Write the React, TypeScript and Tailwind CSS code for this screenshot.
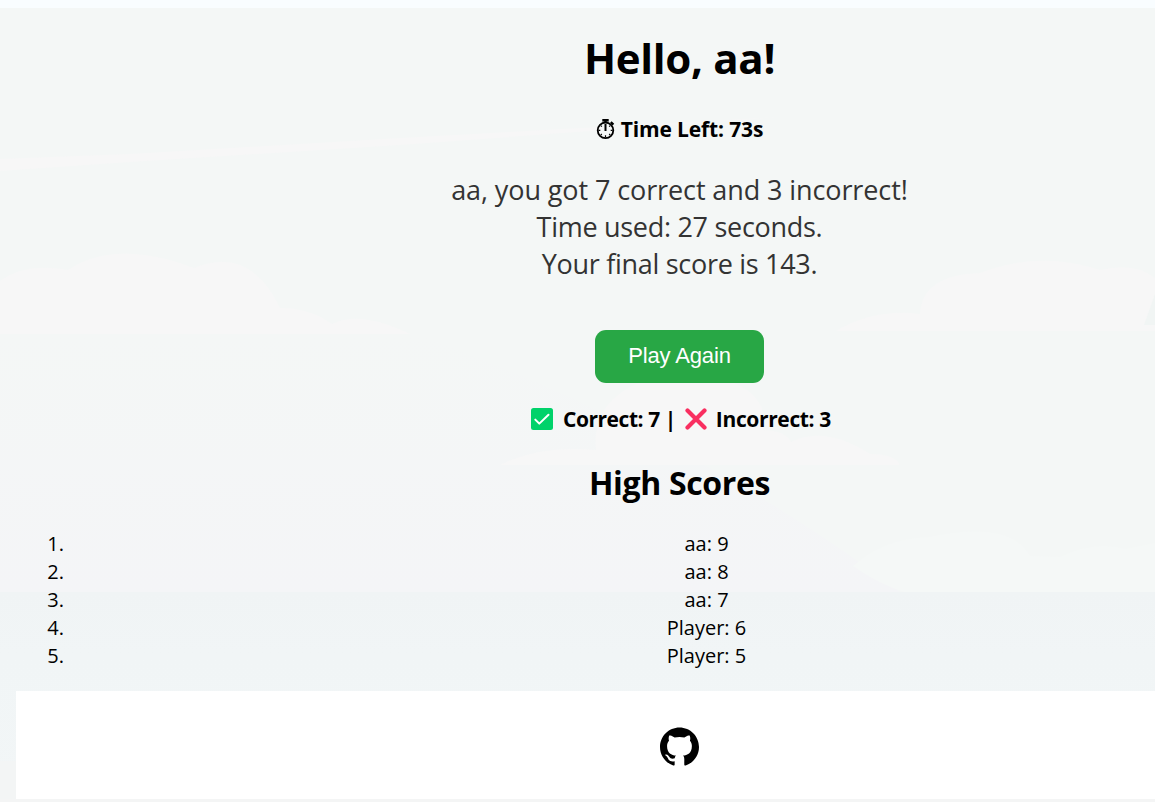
import { SiGithub } from "react-icons/si";

const scores = [
  { name: "aa", score: 9 },
  { name: "aa", score: 8 },
  { name: "aa", score: 7 },
  { name: "Player", score: 6 },
  { name: "Player", score: 5 },
];

function Sky() {
  return (
    <svg className="absolute inset-0 -z-10" width="1155" height="802" viewBox="0 0 1155 802" aria-hidden="true">
      <defs>
        <linearGradient id="sea" x1="0" y1="0" x2="0" y2="1">
          <stop offset="0" stopColor="#f0f4f5" />
          <stop offset="0.3" stopColor="#f1f5f6" />
          <stop offset="1" stopColor="#f2f6f7" />
        </linearGradient>
        <linearGradient id="haze" x1="0" y1="0" x2="0" y2="1">
          <stop offset="0" stopColor="#f4f7f6" />
          <stop offset="1" stopColor="#f4f5f7" />
        </linearGradient>
      </defs>
      <rect width="1155" height="802" fill="#f4f7f6" />
      <path d="M0 335H420Q700 440 900 592H0Z" fill="url(#haze)" />
      <path d="M0 159L130 154L400 138L780 117L400 145L130 162L0 171Z" fill="#f7f7f7" />
      <path d="M0 281Q25 262 68 270Q115 238 194 268Q250 245 280 308Q310 308 332 324Q360 310 410 334H0Z" fill="#f7f7f7" />
      <path d="M836 331Q875 308 920 314Q922 275 980 273Q1040 250 1100 270Q1135 262 1155 278V331Z" fill="#f7f7f7" />
      <path d="M500 465Q540 445 596 450Q590 395 660 375Q745 370 762 408V430Q785 430 791 442Q825 425 870 454Q895 454 900 465Z" fill="#f7f7f7" />
      <path d="M853 566Q885 538 930 537Q1010 520 1030 556L1060 557Q1095 540 1125 549L1155 543V592H905Q880 585 853 566Z" fill="#f5f8f7" />
      <rect y="592" width="1155" height="210" fill="url(#sea)" />
      <path d="M1155 230L1134 249M1155 294L1144 325H1155Z" fill="#f1f5f4" />
      <rect y="761" width="16" height="41" fill="#f3f5f5" />
      <rect y="799" width="1155" height="3" fill="#f4f5f5" />
      <rect width="1155" height="8" fill="#f9fdff" />
    </svg>
  );
}

function Stopwatch() {
  return (
    <svg className="mr-[6px]" width="19" height="22" viewBox="0 0 19 22" fill="none" stroke="#000" aria-hidden="true">
      <circle cx="9.5" cy="12.3" r="7.8" strokeWidth="1.8" />
      <path d="M6.3 2.3h6.4" strokeWidth="2.6" />
      <path d="M9.5 2v3M14.8 4.2l2.6 2.4" strokeWidth="2.4" />
      <path d="M9.5 6v7" strokeWidth="2" />
      <path d="M9.5 17.3v2M2.5 12.3h1.8M14.7 12.3h1.8M4.8 7.6l1 1M14.2 7.6l-1 1M4.8 17l1-1M14.2 17l-1-1" strokeWidth="1.2" />
    </svg>
  );
}

export default function App() {
  return (
    <div className="relative isolate h-[802px] w-[1155px] overflow-hidden font-['Open_Sans',sans-serif] text-black">
      <Sky />
      <main className="ml-4 flex w-[1327px] flex-col text-center">
        <h1 className="mt-7 h-[60px] text-[42px] leading-[60px] font-bold tracking-[-0.3px] whitespace-nowrap">
          Hello, aa!
        </h1>
        <div className="mt-[26px] flex h-[30px] items-center justify-center text-[21px] leading-[30px] font-bold tracking-[-0.15px]">
          <Stopwatch />
          <span>Time Left: 73s</span>
        </div>
        <div className="mt-[27px] text-[27px] leading-[37px] text-[#333]">
          <p className="tracking-[-0.1px]">aa, you got 7 correct and 3 incorrect!</p>
          <p className="tracking-[-0.29px]">Time used: 27 seconds.</p>
          <p className="tracking-[-0.29px]">Your final score is 143.</p>
        </div>
        <button className="mt-12 h-[53px] w-[169px] self-center rounded-[11px] bg-[#28a745] pb-[2px] font-['Liberation_Sans',sans-serif] text-[22px] tracking-[-0.15px] text-white">
          Play Again
        </button>
        <div className="mt-[21px] flex h-[30px] items-center justify-center pl-[3px] text-[21px] leading-[30px] font-bold tracking-[-0.35px]">
          <svg className="mr-[10px]" width="22" height="22" viewBox="0 0 22 22" aria-hidden="true">
            <rect width="22" height="22" rx="2.5" fill="#00d26a" />
            <path d="M4.3 11.6l4 4L17.5 6.8" fill="none" stroke="#fff" strokeWidth="2" strokeLinecap="round" strokeLinejoin="round" />
          </svg>
          <span className="tracking-[-0.45px]">Correct: 7 |</span>
          <svg className="mr-[9px] ml-[9px]" width="22" height="22" viewBox="0 0 22 22" aria-hidden="true">
            <path d="M2.5 2.5l17 17M19.5 2.5l-17 17" stroke="#f92f60" strokeWidth="4.2" strokeLinecap="round" />
          </svg>
          <span>Incorrect: 3</span>
        </div>
        <h2 className="mt-[26px] h-[46px] text-[32px] leading-[46px] font-bold tracking-[-0.35px]">High Scores</h2>
        <ol className="mt-[24px] text-[20px] leading-7">
          {scores.map((s, i) => (
            <li key={i} className="flex">
              <span className="w-[54px] pr-[6px] text-right">{i + 1}.</span>
              <span className="flex-1">
                {s.name}: {s.score}
              </span>
            </li>
          ))}
        </ol>
        <footer className="mt-[21px] flex h-[108px] items-center justify-center bg-white">
          <SiGithub className="mt-[3px] size-[39px]" />
        </footer>
      </main>
    </div>
  );
}
